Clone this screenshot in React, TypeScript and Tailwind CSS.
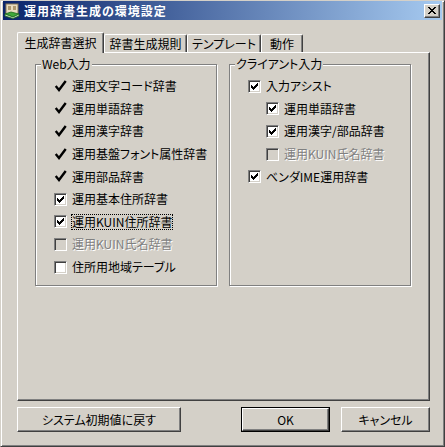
import React from 'react';

const FONT = '"Noto Sans CJK JP", "Liberation Sans", sans-serif';

// Marlett-style tick used by the fixed (always-on) items
function Tick() {
  return (
    <svg width="13" height="13" viewBox="0 0 13 13" className="shrink-0">
      <path d="M2.5 7 L5 10 L11 2" fill="none" stroke="#000" strokeWidth="2.4" strokeLinecap="square" />
    </svg>
  );
}

// classic 7x7 checkbox glyph, drawn pixel by pixel
const CHECK_COLS = [2, 3, 4, 3, 2, 1, 0];

function CheckBox({ checked, disabled }: { checked?: boolean; disabled?: boolean }) {
  return (
    <div className="w-[13px] h-[13px] shrink-0 border border-t-[#808080] border-l-[#808080] border-b-white border-r-white">
      <div
        className={`w-full h-full shadow-[inset_1px_1px_#404040,inset_-1px_-1px_#d4d0c8] ${disabled ? 'bg-[#d4d0c8]' : 'bg-white'}`}
      >
        {checked && (
          <svg width="11" height="11" viewBox="0 0 11 11" shapeRendering="crispEdges">
            {CHECK_COLS.map((y, x) => (
              <rect key={x} x={2 + x} y={2 + y} width="1" height="3" fill={disabled ? '#808080' : '#000'} />
            ))}
          </svg>
        )}
      </div>
    </div>
  );
}

type Item = {
  label: string;
  kind: 'tick' | 'box';
  checked?: boolean;
  disabled?: boolean;
  focus?: boolean;
  indent?: boolean;
};

const WEB_ITEMS: Item[] = [
  { label: '運用文字コード辞書', kind: 'tick' },
  { label: '運用単語辞書', kind: 'tick' },
  { label: '運用漢字辞書', kind: 'tick' },
  { label: '運用基盤フォント属性辞書', kind: 'tick' },
  { label: '運用部品辞書', kind: 'tick' },
  { label: '運用基本住所辞書', kind: 'box', checked: true },
  { label: '運用KUIN住所辞書', kind: 'box', checked: true, focus: true },
  { label: '運用KUIN氏名辞書', kind: 'box', disabled: true },
  { label: '住所用地域テーブル', kind: 'box' },
];

const CLIENT_ITEMS: Item[] = [
  { label: '入力アシスト', kind: 'box', checked: true },
  { label: '運用単語辞書', kind: 'box', checked: true, indent: true },
  { label: '運用漢字/部品辞書', kind: 'box', checked: true, indent: true },
  { label: '運用KUIN氏名辞書', kind: 'box', disabled: true, indent: true },
  { label: 'ベンダIME運用辞書', kind: 'box', checked: true },
];

function Row({ item }: { item: Item }) {
  return (
    <div className={`h-[22.6px] flex items-center gap-[5px] ${item.indent ? 'pl-[18px]' : ''}`}>
      {item.kind === 'tick' ? <Tick /> : <CheckBox checked={item.checked} disabled={item.disabled} />}
      <span
        className={`leading-[14px] whitespace-nowrap ${
          item.disabled ? 'text-[#808080] [text-shadow:1px_1px_0_#fff]' : ''
        } ${item.focus ? 'outline-1 outline-dotted outline-black' : ''}`}
      >
        {item.label}
      </span>
    </div>
  );
}

function GroupBox({ title, items }: { title: string; items: Item[] }) {
  return (
    <div className="relative w-[182px] h-[222px] border border-[#808080] shadow-[inset_1px_1px_#fff,1px_1px_#fff]">
      <span className="absolute -top-[8px] left-[5px] px-[1px] bg-[#d4d0c8] leading-[14px]">{title}</span>
      <div className="flex flex-col pt-[10px] pl-[18px]">
        {items.map((it, i) => (
          <Row key={i} item={it} />
        ))}
      </div>
    </div>
  );
}

function Tab({ label, width, active }: { label: string; width: string; active?: boolean }) {
  return (
    <div
      className={`${width} ${
        active ? 'h-[21px] -mb-[1px] z-10 pt-[3px]' : 'h-[18px] pt-[2px]'
      } bg-[#d4d0c8] rounded-t-[2px] border-t border-l border-r border-t-white border-l-white border-r-[#404040] shadow-[inset_-1px_0_#808080] flex justify-center leading-[14px] whitespace-nowrap`}
    >
      {label}
    </div>
  );
}

function Button({ label, width, isDefault }: { label: string; width: string; isDefault?: boolean }) {
  const face = (
    <div className="w-full h-full flex items-center justify-center border border-t-white border-l-white border-b-[#404040] border-r-[#404040] shadow-[inset_-1px_-1px_#808080] leading-none">
      {label}
    </div>
  );
  return (
    <div className={`${width} h-[25px] ${isDefault ? 'border border-black' : ''}`}>{face}</div>
  );
}

function AppIcon() {
  return (
    <svg width="16" height="16" viewBox="0 0 16 16" className="shrink-0">
      <rect x="2" y="1" width="12" height="11" fill="#e8dcc0" stroke="#8a7a5a" strokeWidth="1" />
      <rect x="4" y="3" width="3" height="4" fill="#b09a70" />
      <rect x="9" y="3" width="3" height="4" fill="#b09a70" />
      <path d="M1 11 L7 9 L15 11 L9 14 Z" fill="#3fa83a" stroke="#1d6a1a" strokeWidth="0.8" />
      <path d="M1 11 L1 13 L9 15.5 L15 13 L15 11 L9 14 Z" fill="#cfe8c8" stroke="#1d6a1a" strokeWidth="0.8" />
    </svg>
  );
}

export default function App() {
  return (
    <div
      className="w-[445px] h-[447px] bg-[#d4d0c8] border border-t-[#d4d0c8] border-l-[#d4d0c8] border-b-[#404040] border-r-[#404040] shadow-[inset_1px_1px_#fff,inset_-1px_-1px_#808080] flex flex-col text-[12px] text-black select-none [font-feature-settings:'palt']"
      style={{ fontFamily: FONT }}
    >
      {/* title bar */}
      <div className="mx-[2px] h-[19px] flex items-center bg-[linear-gradient(to_right,#0a246a,#a6caf0)]">
        <div className="ml-[1px]">
          <AppIcon />
        </div>
        <span className="ml-[4px] text-white font-bold tracking-[1px] leading-none">運用辞書生成の環境設定</span>
        <div className="ml-auto mr-[2px] w-[16px] h-[14px] bg-[#d4d0c8] border border-t-white border-l-white border-b-[#404040] border-r-[#404040] shadow-[inset_-1px_-1px_#808080] flex items-center justify-center">
          <svg width="8" height="7" viewBox="0 0 8 7" shapeRendering="crispEdges">
            <path d="M0 0h2v1h-2zM6 0h2v1h-2zM1 1h2v1h-2zM5 1h2v1h-2zM2 2h4v1h-4zM3 3h2v1h-2zM2 4h4v1h-4zM1 5h2v1h-2zM5 5h2v1h-2zM0 6h2v1h-2zM6 6h2v1h-2z" fill="#000" />
          </svg>
        </div>
      </div>

      {/* tabs */}
      <div className="mt-[12px] ml-[16px] flex items-end">
        <Tab label="生成辞書選択" width="w-[87px]" active />
        <Tab label="辞書生成規則" width="w-[83px]" />
        <Tab label="テンプレート" width="w-[74px]" />
        <Tab label="動作" width="w-[42px]" />
      </div>

      {/* tab page */}
      <div className="ml-[16px] w-[413px] h-[349px] border border-t-white border-l-white border-b-[#404040] border-r-[#404040] shadow-[inset_-1px_-1px_#808080] pt-[11px] pl-[17px] flex gap-[12px]">
        <GroupBox title="Web入力" items={WEB_ITEMS} />
        <GroupBox title="クライアント入力" items={CLIENT_ITEMS} />
      </div>

      {/* buttons */}
      <div className="mt-[6px] ml-[16px] mr-[14px] flex">
        <Button label="システム初期値に戻す" width="w-[164px]" />
        <div className="ml-auto flex gap-[11px]">
          <Button label="OK" width="w-[89px]" isDefault />
          <Button label="キャンセル" width="w-[89px]" />
        </div>
      </div>
    </div>
  );
}
